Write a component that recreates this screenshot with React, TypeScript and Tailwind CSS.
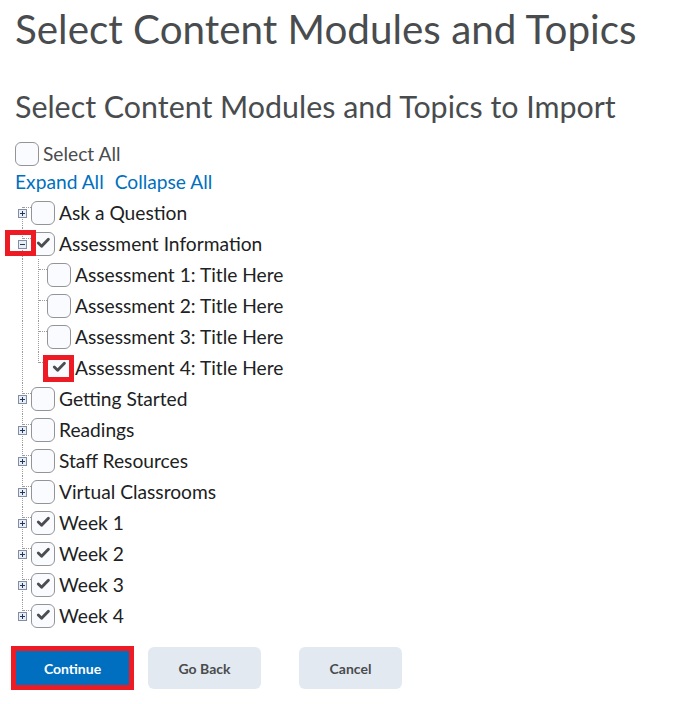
import { FC } from 'react';

type TreeNode = {
  label: string;
  checked?: boolean;
  open?: boolean;
  flagged?: boolean;
  children?: TreeNode[];
};

const tree: TreeNode[] = [
  { label: 'Ask a Question' },
  {
    label: 'Assessment Information',
    checked: true,
    open: true,
    children: [
      { label: 'Assessment 1: Title Here' },
      { label: 'Assessment 2: Title Here' },
      { label: 'Assessment 3: Title Here' },
      { label: 'Assessment 4: Title Here', checked: true, flagged: true },
    ],
  },
  { label: 'Getting Started' },
  { label: 'Readings' },
  { label: 'Staff Resources' },
  { label: 'Virtual Classrooms' },
  { label: 'Week 1', checked: true },
  { label: 'Week 2', checked: true },
  { label: 'Week 3', checked: true },
  { label: 'Week 4', checked: true },
];

const Expander: FC<{ open?: boolean }> = ({ open }) => (
  <svg width="9" height="9" viewBox="0 0 9 9" className="block">
    <rect x="0.5" y="0.5" width="8" height="8" fill="#e9eef5" stroke="#7f8fa8" />
    <path d="M2 4.5h5" stroke="#23395b" />
    {!open && <path d="M4.5 2v5" stroke="#23395b" />}
  </svg>
);

const Checkbox: FC<{ checked?: boolean }> = ({ checked }) => (
  <span className="flex h-6 w-6 shrink-0 items-center justify-center rounded-[6px] border border-[#929598] bg-[#f9fbff]">
    {checked && (
      <svg width="22" height="22" viewBox="0 0 22 22">
        <path
          d="M6.3 10l3.3 3.2 6.8-7"
          fill="none"
          stroke="#4b4e51"
          strokeWidth="2.9"
          strokeLinecap="round"
          strokeLinejoin="round"
        />
      </svg>
    )}
  </span>
);

// one 16px wide column of connector lines
const Gutter: FC<{ line: 'full' | 'top' | 'bottom' | 'none'; connector?: boolean; expander?: boolean; open?: boolean; flagged?: boolean }> = ({
  line,
  connector,
  expander,
  open,
  flagged,
}) => (
  <div className="relative h-full w-4 shrink-0">
    {line === 'full' && <div className="absolute left-[7px] top-0 bottom-0 border-l border-dotted border-[#9c9c9c]" />}
    {line === 'top' && <div className="absolute left-[7px] top-0 h-[11px] border-l border-dotted border-[#9c9c9c]" />}
    {line === 'bottom' && <div className="absolute left-[7px] top-[10px] bottom-0 border-l border-dotted border-[#9c9c9c]" />}
    {connector && <div className="absolute left-[8px] right-0 top-[10px] border-t border-dotted border-[#9c9c9c]" />}
    {expander && (
      <div className="absolute left-[3px] top-[12px]">
        <Expander open={open} />
      </div>
    )}
    {flagged && <div className="absolute -left-[10px] top-[2px] z-10 h-[26px] w-[31px] border-[5px] border-[#ed1c24]" />}
  </div>
);

const Row: FC<{ node: TreeNode; gutters: React.ReactNode }> = ({ node, gutters }) => (
  <div className="flex h-[31px] items-center">
    {gutters}
    <div className="relative">
      <Checkbox checked={node.checked} />
      {node.flagged && <div className="absolute -left-[4px] -top-[1px] h-[27px] w-[31px] border-[5px] border-[#ed1c24]" />}
    </div>
    <span className="ml-1 text-[19.2px] leading-[22px] text-[#202122]">{node.label}</span>
  </div>
);

export default function App() {
  const last = tree.length - 1;
  return (
    <div className="min-h-screen bg-white px-[15px] font-['Lato','Liberation_Sans',sans-serif]">
      <h1 className="pt-[5px] text-[40.4px] leading-[48px] font-normal text-[#494c4e]">Select Content Modules and Topics</h1>
      <h2 className="mt-[36px] text-[30.4px] leading-[34px] font-normal text-[#494c4e]">Select Content Modules and Topics to Import</h2>

      <label className="mt-[19px] flex h-6 items-center">
        <Checkbox />
        <span className="ml-1 text-[19.2px] leading-[22px] text-[#494c4e]">Select All</span>
      </label>

      <div className="mt-[5px] flex gap-[11px] text-[19.2px] leading-[22px] text-[#006fbf]">
        <a href="#">Expand All</a>
        <a href="#">Collapse All</a>
      </div>

      <div className="mt-[4px]">
        {tree.map((node, i) => (
          <div key={node.label}>
            <Row
              node={node}
              gutters={
                <Gutter
                  line={i === 0 ? 'bottom' : i === last ? 'top' : 'full'}
                  connector
                  expander
                  open={node.open}
                  flagged={node.open}
                />
              }
            />
            {node.open &&
              node.children?.map((child, j) => (
                <Row
                  key={child.label}
                  node={child}
                  gutters={
                    <>
                      <Gutter line="full" />
                      <Gutter line={j === node.children!.length - 1 ? 'top' : 'full'} connector />
                    </>
                  }
                />
              ))}
          </div>
        ))}
      </div>

      <div className="-ml-[4px] mt-[15px] flex items-center">
        <button className="h-[44px] w-[123px] border-[5px] border-[#ed1c24] bg-[#006fbf] text-[14px] font-bold text-white">
          Continue
        </button>
        <button className="ml-[14px] h-[42px] w-[113px] rounded-[6px] bg-[#e3e9f1] text-[14px] font-bold text-[#494c4e]">
          Go Back
        </button>
        <button className="ml-[38px] h-[42px] w-[103px] rounded-[6px] bg-[#e3e9f1] text-[14px] font-bold text-[#494c4e]">
          Cancel
        </button>
      </div>
    </div>
  );
}
